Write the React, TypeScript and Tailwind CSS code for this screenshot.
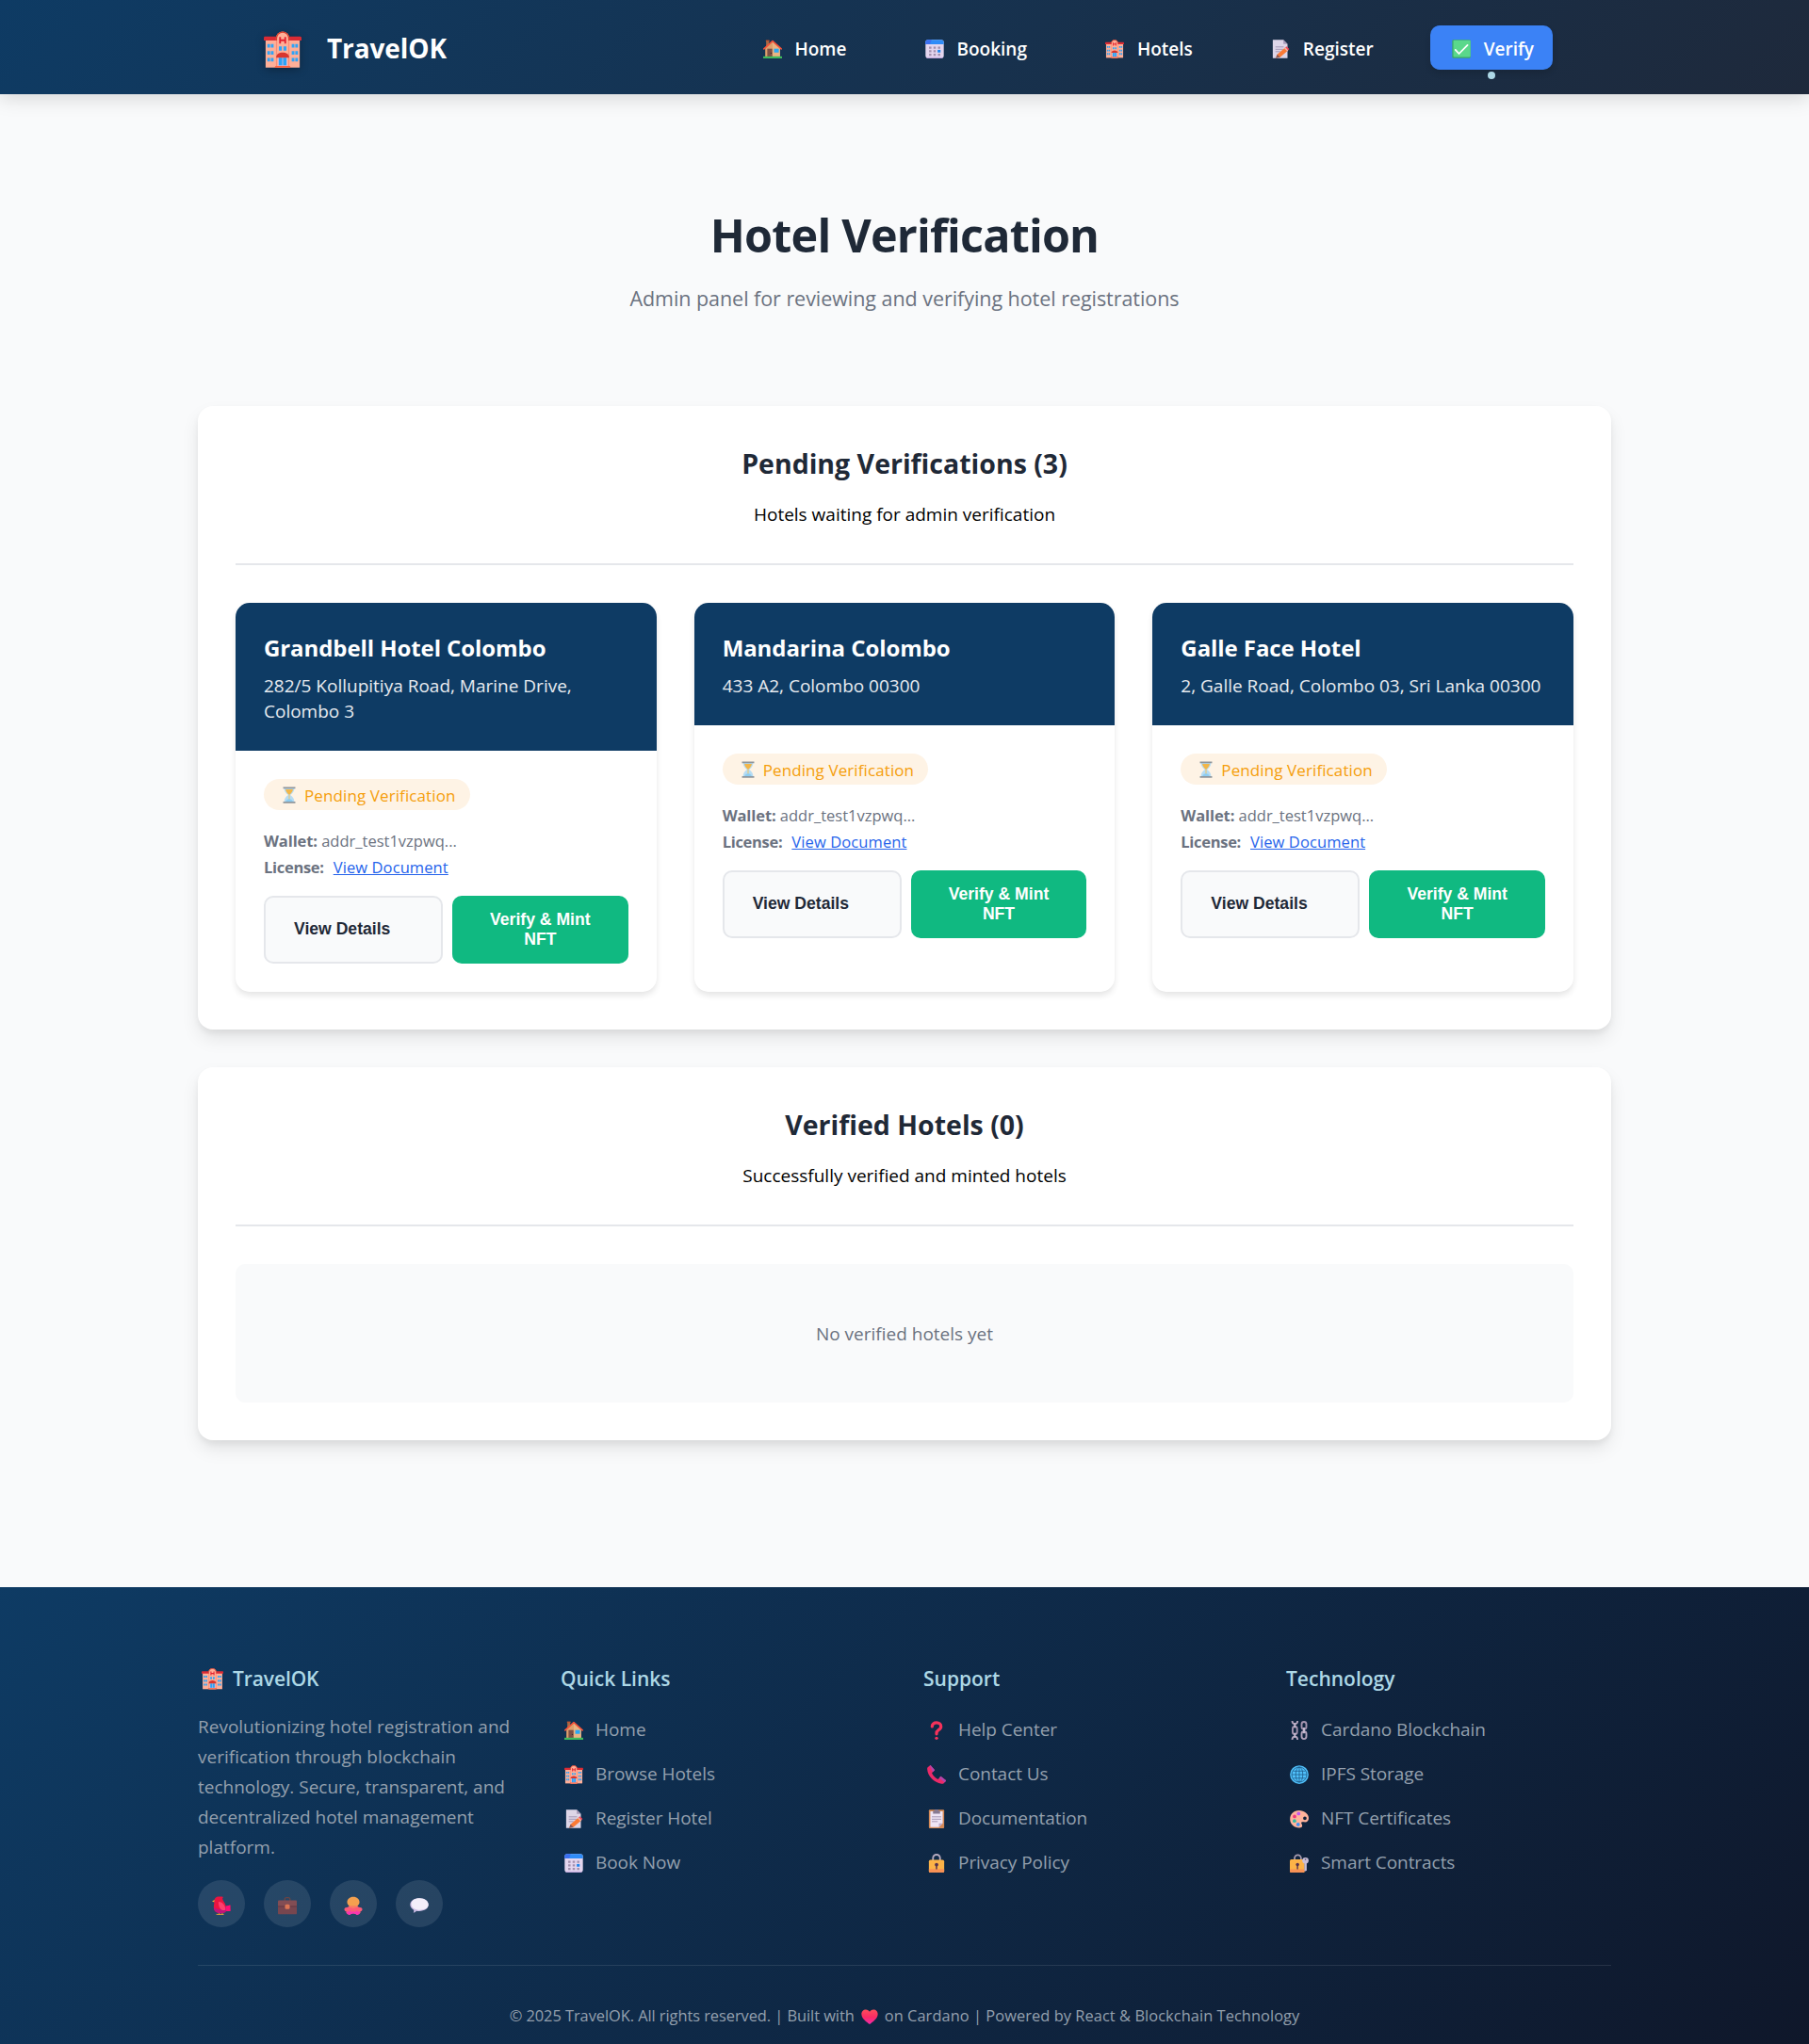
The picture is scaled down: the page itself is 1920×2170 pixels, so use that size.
import type { ComponentType, ReactNode } from "react";

type IconProps = { className?: string };
type IconType = ComponentType<IconProps>;

function Svg({ className = "", children }: { className?: string; children: ReactNode }) {
  return (
    <svg viewBox="0 0 32 32" fill="none" aria-hidden="true" className={`shrink-0 ${className}`}>
      {children}
    </svg>
  );
}

const HotelIcon: IconType = ({ className }) => (
  <Svg className={className}>
    <path d="M1.5 6h29v25h-29z" fill="#ffaf98" />
    <path d="M1 4.5h30c.6 0 1 .6 1 1.200v2.200H0V5.700c0-.700.4-1.200 1-1.200Z" fill="#d92b34" />
    <path d="M10.300 31V6a5.700 5.700 0 0 1 11.400 0v25z" fill="#f98d76" />
    <path d="M10.300 6a5.700 5.700 0 0 1 11.400 0v2h-1.500V6a4.200 4.200 0 0 0-8.400 0v2h-1.500z" fill="#d8412f" />
    <path d="M11.300 31V6.200a4.700 4.700 0 0 1 9.400 0V31z" fill="#ffaf98" />
    <path d="M13.800 5v5.500M18.200 5v5.500M13.800 7.800h4.400" stroke="#e3202f" strokeWidth="1.500" />
    <path d="M3 11h2.300v3H3zM6 11h2.300v3H6zM3 17h2.300v3H3zM6 17h2.300v3H6zM3 22.800h2.300v3H3zM6 22.800h2.300v3H6zM23.700 11H26v3h-2.300zM26.700 11H29v3h-2.300zM23.700 17H26v3h-2.300zM26.700 17H29v3h-2.300zM23.700 22.800H26v3h-2.300zM26.700 22.800H29v3h-2.300zM12.800 13h2.500v3.500h-2.500zM16.700 13h2.500v3.500h-2.500z" fill="#2fa4f7" />
    <path d="M12 22h8v8h-8z" fill="#c9b7d8" />
    <path d="M12.800 22.500h2.800V29h-2.800zM16.400 22.500h2.800V29h-2.800z" fill="#29a3f7" />
    <path d="M10.500 22.500c0-3 2.500-4.300 5.500-4.300s5.500 1.300 5.500 4.300z" fill="#d8362f" />
    <path d="M10 29.500h12L23 31H9z" fill="#ff5f3c" />
  </Svg>
);

const HouseIcon: IconType = ({ className }) => (
  <Svg className={className}>
    <path d="M5 1.500h5V14H5z" fill="#a56a45" />
    <path d="M4.500 1h6v2.200h-6z" fill="#c1512f" />
    <path d="M3.500 14.500 16 3l12.500 11.500V30h-25z" fill="#dfa06c" />
    <path d="M16 3l12.500 11.500V30H16z" fill="#eab583" />
    <path d="M1.300 15.800 16 2.500l14.700 13.300" stroke="#f4523a" strokeWidth="2.600" strokeLinecap="round" strokeLinejoin="round" />
    <path d="M7 15.500h8.500V30H7z" fill="#7d4f45" />
    <circle cx="13.500" cy="23" r="1" fill="#3a2a2a" />
    <path d="M18.500 15.500h8v6.500h-8z" fill="#2aa8f5" />
    <path d="M0 28.500h32V32H0z" fill="#3fba5d" />
  </Svg>
);

const CalendarIcon: IconType = ({ className }) => (
  <Svg className={className}>
    <rect x=".5" y=".5" width="31" height="31" rx="4.500" fill="#e4d6ef" />
    <path d="M.5 8V5A4.500 4.500 0 0 1 5 .5h22A4.500 4.500 0 0 1 31.500 5v3z" fill="#2f8cf8" />
    <path d="M.5 8V5A4.500 4.500 0 0 1 5 .5h6L8 8z" fill="#3b6ff0" />
    <path d="M6.500 12h4v3.500h-4zM14 12h4v3.500h-4zM21.500 12h4v3.500h-4zM6.500 18h4v3.500h-4zM14 18h4v3.500h-4zM6.500 24h4v3.500h-4zM14 24h4v3.500h-4zM21.500 24h4v3.500h-4z" fill="#a290ae" />
    <path d="M21 17.500h5V22h-5z" fill="#1f86ee" />
    <path d="M2.500 30.800h27" stroke="#c9a5e8" strokeWidth="1.200" />
  </Svg>
);

const MemoIcon: IconType = ({ className }) => (
  <Svg className={className}>
    <path d="M3 .5h18L28 7.500V31.500H3z" fill="#ded6e8" />
    <path d="M21 .5 28 7.500h-7z" fill="#a99cba" />
    <path d="M7.500 12.500h14M7.500 16.500h13M7.500 20.500h8" stroke="#9b8fae" strokeWidth="1.400" />
    <path d="m8.500 31 2-6L24 13.500l5 5L15.500 30z" fill="#fb7a35" />
    <path d="m24 13.500 2.200-2 4.700 4.600-1.900 2.400z" fill="#f2455c" />
    <path d="m10.500 25 5 5-7.500 1.500z" fill="#8d5a56" />
    <path d="m22.500 14.800 5 5 1.700-1.500-5-5z" fill="#f3b5a5" />
  </Svg>
);

const CheckIcon: IconType = ({ className }) => (
  <Svg className={className}>
    <rect x=".5" y=".5" width="31" height="31" rx="2" fill="#3aa866" />
    <rect x="2.500" y="1" width="29" height="28.500" rx="1.500" fill="#5ad88b" />
    <path d="m6 17.500 6 6.500L26.500 9.500" stroke="#fff" strokeWidth="2.800" strokeLinecap="round" strokeLinejoin="round" />
  </Svg>
);

const HourglassIcon: IconType = ({ className }) => (
  <Svg className={className}>
    <path d="M6.500 3h19c0 6-2.500 9-7.500 13 5 4 7.500 7 7.500 13h-19c0-6 2.500-9 7.500-13C9 12 6.500 9 6.500 3Z" fill="#b7dcf3" />
    <path d="M9 5.500h14c-.5 4.500-3.500 7.500-7 10.500-3.500-3-6.500-6-7-10.500Z" fill="#f2b648" />
    <path d="M16 16v11" stroke="#f2c25f" strokeWidth="1.600" />
    <path d="M9 29c1-4 4-5.500 7-5.500s6 1.500 7 5.500z" fill="#8ccdf2" />
    <path d="M4.500 1h23v2.800h-23zM4.500 28.600h23v2.800h-23z" fill="#8f969c" />
  </Svg>
);

const BirdIcon: IconType = ({ className }) => (
  <Svg className={className}>
    <path d="M12 28v3M17.500 28v3M8 31h6M14.500 31h5" stroke="#e9a13a" strokeWidth="1.500" strokeLinecap="round" />
    <path d="M4.500 6 0 9.300l4.800 1z" fill="#f7b531" />
    <path d="M4 7.500C4 3.500 7 .8 11 .8h6c2 0 2.400 1.700.8 2.600C18 8 22.500 10.500 23.500 17l7.500-2v10.500h-7c-2 2.500-4.500 3.500-9 3.500C8 29 3 25.500 3 19c0-4 1-7 1-11.500Z" fill="#ea1440" />
    <path d="M3 19c0 6.500 5 10 12 10 4.500 0 7-1 9-3.500h7V21l-11-3-8 5z" fill="#c0147c" />
    <path d="M11 9.500c6 0 12 5.500 12 14-7 2.500-12-3-12-14Z" fill="#ff3f6d" />
    <path d="m23.500 17 7.500-2v10.500h-6.500z" fill="#ff0f76" />
  </Svg>
);

const BriefcaseIcon: IconType = ({ className }) => (
  <Svg className={className}>
    <path d="M11.500 8V5.500c0-2 1.200-3 3-3h3c1.800 0 3 1 3 3V8" stroke="#6b4444" strokeWidth="2" />
    <rect x="0" y="7" width="32" height="12" rx="1.500" fill="#824d54" />
    <path d="M0 17.500h32V29c0 1-.6 1.800-1.700 1.800H1.700C.6 30.800 0 30 0 29z" fill="#77464f" />
    <path d="M0 16.800h32v1.300H0z" fill="#5b333e" />
    <rect x="12" y="14" width="8" height="8" rx="2.500" fill="#dc7654" />
  </Svg>
);

const OctopusIcon: IconType = ({ className }) => (
  <Svg className={className}>
    <path d="M10 14h12c.3 2.500 1.500 4.200 3.500 4.600 2.800.4 4.700.400 5.500 2.400.9 2.500-.6 4.600-3 5 .8 2-.6 4-2.500 4.300-1.600 1.700-4 1.700-5.300 0L16 29l-4.200 1.300c-1.300 1.700-3.700 1.700-5.300 0C4.600 30 3.200 28 4 26c-2.400-.4-3.900-2.500-3-5 .8-2 2.700-2 5.500-2.400 2-.4 3.200-2.100 3.500-4.600Z" fill="#fc5b78" />
    <path d="M5 26.500c2 .6 4-.5 5.500-2.500L13 27.500l3-2 3 2 2.500-3.500c1.500 2 3.500 3.100 5.500 2.500.9 2-.6 4.500-2.500 4.800-1.600 1-3.200.8-4.700-.8L16 29.500l-3.800 1c-1.500 1.600-3.100 1.800-4.700.8-1.900-.3-3.400-2.800-2.500-4.800Z" fill="#fb35b2" />
    <path d="M16 1c6.200 0 10.500 4 10.500 9 0 3.500-1.800 4.700-3.200 6.500C22 18.800 20 20 16 20s-6-1.200-7.300-3.500C7.300 14.700 5.500 13.500 5.500 10c0-5 4.300-9 10.500-9Z" fill="#f4a04f" />
    <path d="M8.700 16.500h14.600C22 18.800 20 20 16 20s-6-1.200-7.300-3.500Z" fill="#f77b64" />
  </Svg>
);

const SpeechIcon: IconType = ({ className }) => (
  <Svg className={className}>
    <path d="M16 3.500c9 0 15.500 4.500 15.500 11S25 25.500 16 25.500c-1.800 0-3.500-.2-5-.500C10 26.500 8 28 6 28c1-1.500 1-3 .5-4.500C3 21.500.5 18.500.5 14.500.5 8 7 3.500 16 3.500Z" fill="#cbbbe4" />
    <path d="M17 3.600c8.500.2 14.500 4.700 14.500 10.900S25.500 23.500 17 23.500 2.500 19.500 2.500 13.500 8 3.400 17 3.600Z" fill="#f3eefa" />
  </Svg>
);

const QuestionIcon: IconType = ({ className }) => (
  <Svg className={className}>
    <path d="M8.500 9.500C8.500 5.300 11.700 3 16 3s7.500 2.600 7.500 6.500c0 3.500-2.300 4.800-4.500 6.200-2 1.300-3 2.400-3 5.300v1" stroke="#f5325b" strokeWidth="5.200" strokeLinecap="round" />
    <circle cx="16" cy="29.300" r="2.700" fill="#f5325b" />
  </Svg>
);

const PhoneIcon: IconType = ({ className }) => (
  <Svg className={className}>
    <path d="M1 3.500 4.500.6c.6-.5 1.400-.4 1.900.2L13 8.500l-5 4.600c2.500 5 6 8.500 10.500 10.700l4.600-5 8.200 6.300c.7.600.8 1.500.2 2.100l-3.200 3.400c-1 1-2.300 1.200-4 1C12 30 .6 18.500.2 6.500c0-1.200.1-2.400.8-3Z" fill="#ec2a68" />
    <path d="M4.500.6c.6-.5 1.400-.4 1.900.2L13 8.500l-3.300 3zM23.100 18.800l8.200 6.300c.7.600.8 1.500.2 2.100L30 29l-9.500-7.500z" fill="#b145ae" />
  </Svg>
);

const ClipboardIcon: IconType = ({ className }) => (
  <Svg className={className}>
    <rect x="3" y=".5" width="26" height="31.500" rx="1.500" fill="#d58a57" />
    <path d="M5.500 3h21v20.500L20 30H5.500z" fill="#efe5f6" />
    <path d="M20 30v-6.500h6.500z" fill="#bbaaca" />
    <path d="M10 2.500h2.500a3.500 3.500 0 0 1 7 0H22v4.500H10z" fill="#887a92" />
    <path d="M8 12.500h16M8 16.500h16M8 20.500h10" stroke="#9c8dad" strokeWidth="1.400" />
  </Svg>
);

const LockIcon: IconType = ({ className }) => (
  <Svg className={className}>
    <path d="M10 12V7.500a6 6 0 0 1 12 0V12" stroke="#b6aabf" strokeWidth="3" />
    <rect x="3" y="10.500" width="26" height="21.500" rx="2.500" fill="#fdb347" />
    <path d="M3 26h26v3.500a2.500 2.500 0 0 1-2.500 2.500h-21A2.500 2.500 0 0 1 3 29.500z" fill="#f79155" />
    <circle cx="16" cy="18.500" r="3" fill="#55314f" />
    <path d="M14.800 19h2.400v7.500h-2.400z" fill="#55314f" />
  </Svg>
);

const LockKeyIcon: IconType = ({ className }) => (
  <Svg className={className}>
    <path d="M8 11.500V7.500a5.500 5.500 0 0 1 11 0v4" stroke="#a79bb0" strokeWidth="2.800" />
    <rect x="0" y="9.500" width="25" height="22.500" rx="2.500" fill="#fdb347" />
    <path d="M0 26.500h25v3a2.500 2.500 0 0 1-2.500 2.500h-20A2.500 2.500 0 0 1 0 29.500z" fill="#f79155" />
    <circle cx="13" cy="18.500" r="2.800" fill="#55314f" />
    <path d="M11.900 19h2.200v7.500h-2.200z" fill="#55314f" />
    <circle cx="26.500" cy="11.500" r="5.300" fill="#cabfd8" />
    <circle cx="26.500" cy="9.500" r="1.300" fill="#5a4a68" />
    <path d="M24.600 15.500h4V28l-2 2-2-2z" fill="#cabfd8" />
  </Svg>
);

const ChainsIcon: IconType = ({ className }) => (
  <Svg className={className}>
    <g strokeWidth="3">
      <path d="M4 0c0 3.500 2 5 4.500 5S13 3.500 13 0M4 32c0-4 2-5.500 4.500-5.500S13 28 13 32" stroke="#b3a4bd" />
      <rect x="4.700" y="9.500" width="7.600" height="13" rx="3.800" stroke="#a494af" />
      <path d="M8.500 4v7.500M8.500 20.500V28" stroke="#c9bcd2" />
      <rect x="20" y="1.500" width="8" height="12.500" rx="4" stroke="#a494af" />
      <rect x="20" y="18" width="8" height="12.500" rx="4" stroke="#b3a4bd" />
      <path d="M24 11v10" stroke="#c9bcd2" />
    </g>
  </Svg>
);

const GlobeIcon: IconType = ({ className }) => (
  <Svg className={className}>
    <circle cx="16" cy="16" r="15.800" fill="#4fc0fa" />
    <g stroke="#174f7c" strokeWidth="1.100">
      <circle cx="16" cy="16" r="12.800" />
      <ellipse cx="16" cy="16" rx="6" ry="12.800" />
      <path d="M16 3.200v25.600M3.200 16h25.600M5.500 10h21M5.500 22h21" />
    </g>
  </Svg>
);

const PaletteIcon: IconType = ({ className }) => (
  <Svg className={className}>
    <path
      fillRule="evenodd"
      d="M15.500 1.500C24.500 1.500 32 7.500 32 14.500c0 4.500-2.500 7.200-6 7.200-2.500 0-5-1-6.300.3-1.300 1.500 1.300 3 1.300 5.500s-2 3.500-5 3.500C7 31 .3 24.500.3 16.200.3 8 6.500 1.500 15.500 1.500Zm10 10.300a3 3 0 1 0 0 6 3 3 0 0 0 0-6Z"
      fill="#ffb39b"
    />
    <circle cx="14.800" cy="7" r="3" fill="#c255f2" />
    <circle cx="8" cy="11.800" r="3" fill="#f0387f" />
    <circle cx="7.800" cy="19.500" r="3" fill="#35b9a2" />
    <circle cx="14" cy="25.500" r="3" fill="#3c8ff5" />
  </Svg>
);

const HeartIcon: IconType = ({ className }) => (
  <svg viewBox="0 0 36 32" fill="none" aria-hidden="true" className={`shrink-0 ${className ?? ""}`}>
    <defs>
      <linearGradient id="heart" x1="18" y1="0" x2="18" y2="32" gradientUnits="userSpaceOnUse">
        <stop stopColor="#fd5059" />
        <stop offset=".55" stopColor="#f92a65" />
        <stop offset="1" stopColor="#f02bb0" />
      </linearGradient>
    </defs>
    <path d="M10 .8c3.800 0 6.500 2 8 4.700C19.500 2.800 22.200.8 26 .8c5.500 0 9.300 4.200 9.300 9.600C35.300 20 24 27.500 18 32 12 27.500.7 20 .7 10.400.7 5 4.500.8 10 .8Z" fill="url(#heart)" />
  </svg>
);

type LinkItem = { label: string; icon: IconType; active?: boolean };

const navLinks: LinkItem[] = [
  { label: "Home", icon: HouseIcon },
  { label: "Booking", icon: CalendarIcon },
  { label: "Hotels", icon: HotelIcon },
  { label: "Register", icon: MemoIcon },
  { label: "Verify", icon: CheckIcon, active: true },
];

const hotels = [
  { name: "Grandbell Hotel Colombo", address: "282/5 Kollupitiya Road, Marine Drive, Colombo 3" },
  { name: "Mandarina Colombo", address: "433 A2, Colombo 00300" },
  { name: "Galle Face Hotel", address: "2, Galle Road, Colombo 03, Sri Lanka 00300" },
];

const footerColumns: { title: string; links: LinkItem[] }[] = [
  {
    title: "Quick Links",
    links: [
      { label: "Home", icon: HouseIcon },
      { label: "Browse Hotels", icon: HotelIcon },
      { label: "Register Hotel", icon: MemoIcon },
      { label: "Book Now", icon: CalendarIcon },
    ],
  },
  {
    title: "Support",
    links: [
      { label: "Help Center", icon: QuestionIcon },
      { label: "Contact Us", icon: PhoneIcon },
      { label: "Documentation", icon: ClipboardIcon },
      { label: "Privacy Policy", icon: LockIcon },
    ],
  },
  {
    title: "Technology",
    links: [
      { label: "Cardano Blockchain", icon: ChainsIcon },
      { label: "IPFS Storage", icon: GlobeIcon },
      { label: "NFT Certificates", icon: PaletteIcon },
      { label: "Smart Contracts", icon: LockKeyIcon },
    ],
  },
];

const socials: IconType[] = [BirdIcon, BriefcaseIcon, OctopusIcon, SpeechIcon];

function Header() {
  return (
    <header className="relative z-10 h-[100px] bg-[linear-gradient(135deg,#0e3b64_0%,#1e293b_100%)] shadow-[0_4px_20px_rgba(0,0,0,0.15)]">
      <div className="mx-auto flex h-full w-[1500px] items-center justify-between pr-[62px] pl-[70px]">
        <a href="#" className="flex items-center gap-[27px] text-white">
          <HotelIcon className="mt-[6px] size-10 drop-shadow-[0_2px_4px_rgba(0,0,0,0.3)]" />
          <span className="pt-[2px] text-[28px] leading-10 font-bold tracking-[-0.1px]">TravelOK</span>
        </a>
        <nav className="mt-px flex items-center gap-10">
          {navLinks.map(({ label, icon: Icon, active }) => (
            <a
              key={label}
              href="#"
              className={`relative flex h-[47px] items-center gap-[10px] rounded-[10px] px-5 text-[19px] font-semibold text-white ${
                active ? "bg-[#3b82f6] shadow-[0_4px_6px_rgba(0,0,0,0.12)]" : ""
              }`}
            >
              <span className="flex w-[27px] justify-center pt-[3px]">
                <Icon className="size-5" />
              </span>
              <span className="pt-[2px] leading-7">{label}</span>
              {active && (
                <span className="absolute -bottom-[10px] left-1/2 size-2 -translate-x-1/2 rounded-full bg-[#add8e6]" />
              )}
            </a>
          ))}
        </nav>
      </div>
    </header>
  );
}

function Section({ title, subtitle, children }: { title: string; subtitle: string; children: ReactNode }) {
  return (
    <section className="rounded-[16px] bg-white p-10 shadow-[0_10px_20px_-2px_rgba(0,0,0,0.1),0_4px_6px_rgba(0,0,0,0.05)]">
      <div className="mb-10 border-b-2 border-[#e5e7eb] pt-px pb-[38px] text-center">
        <h2 className="text-[28.5px] leading-10 font-bold text-[#1f2937]">{title}</h2>
        <p className="mt-5 text-[19px] leading-7 text-black">{subtitle}</p>
      </div>
      {children}
    </section>
  );
}

function HotelCard({ name, address }: { name: string; address: string }) {
  return (
    <article className="flex h-[413px] flex-col overflow-hidden rounded-[15px] bg-white shadow-[0_4px_6px_rgba(0,0,0,0.1)]">
      <div className="bg-[#0e3b64] px-[30px] pt-[31px] pb-[28px]">
        <h3 className="text-[24px] leading-[34px] font-bold tracking-[-0.08px] text-white">{name}</h3>
        <p className="mt-[10px] text-[19px] leading-[27px] text-white/90">{address}</p>
      </div>
      <div className="p-[30px]">
        <div className="inline-flex h-[33px] items-center gap-[5px] rounded-full bg-[#fef3e5] pr-[15px] pl-4 align-top text-[17px] font-medium tracking-[0.1px] text-[#f59e0b]">
          <span className="flex w-[22px] justify-center">
            <HourglassIcon className="size-[18px]" />
          </span>
          <span className="pt-[2px]">Pending Verification</span>
        </div>
        <div className="mt-[19px] text-[16.5px] leading-7 text-[#6b7280]">
          <p>
            <strong className="font-bold tracking-[-0.1px]">Wallet:</strong> addr_test1vzpwq...
          </p>
          <p>
            <strong className="font-bold tracking-[-0.3px]">License:</strong>
            <a href="#" className="ml-[10px] tracking-[0.1px] text-[#2563eb] underline">
              View Document
            </a>
          </p>
        </div>
        <div className="mt-4 flex h-[72px] gap-[10px] font-['Liberation_Sans',sans-serif] text-[17.6px] leading-[21px] font-bold">
          <button className="w-[190px] rounded-[10px] border-2 border-[#e5e7eb] bg-[#f9fafb] pb-[2px] pl-[30px] text-left text-[#1f2937]">
            View Details
          </button>
          <button className="flex-1 rounded-[10px] bg-[#10b981] px-7 text-center text-white">Verify &amp; Mint NFT</button>
        </div>
      </div>
    </article>
  );
}

function Footer() {
  return (
    <footer className="mt-[156px] h-[485px] bg-[linear-gradient(135deg,#0e3b64_0%,#0f172a_100%)] text-[#94a0ae]">
      <div className="mx-auto w-[1500px] pt-[81px]">
        <div className="grid grid-cols-4 gap-10">
          <div>
            <h3 className="flex items-center text-[21px] leading-[33px] font-semibold tracking-[-0.1px] text-[#add8e6]">
              <HotelIcon className="mr-[10px] ml-1 size-[23px]" />
              TravelOK
            </h3>
            <p className="mt-[18px] text-[19px] leading-8">
              Revolutionizing hotel registration and verification through blockchain technology. Secure, transparent, and
              decentralized hotel management platform.
            </p>
            <div className="mt-[19px] flex gap-5">
              {socials.map((Icon, i) => (
                <a key={i} href="#" className="flex size-[50px] items-center justify-center rounded-full bg-white/10 pt-[3px]">
                  <Icon className="size-5" />
                </a>
              ))}
            </div>
          </div>
          {footerColumns.map(({ title, links }) => (
            <div key={title}>
              <h3 className="text-[21px] leading-[33px] font-semibold text-[#add8e6]">{title}</h3>
              <ul className="mt-6 flex flex-col gap-5">
                {links.map(({ label, icon: Icon }) => (
                  <li
                    key={label}
                    className="flex h-[27px] items-center gap-[9px] text-[19px] leading-[27px] tracking-[-0.05px]"
                  >
                    <span className="flex w-7 justify-center">
                      <Icon className="size-5" />
                    </span>
                    {label}
                  </li>
                ))}
              </ul>
            </div>
          ))}
        </div>
        <div className="mt-10 flex items-center justify-center border-t border-white/10 pt-[39px] text-[16.4px] leading-7">
          <span className="tracking-[-0.05px]">© 2025 TravelOK. All rights reserved. | Built with</span>
          <HeartIcon className="mx-[7px] mt-[2px] h-4 w-[18px]" />
          <span className="tracking-[0.06px]">on Cardano | Powered by React &amp; Blockchain Technology</span>
        </div>
      </div>
    </footer>
  );
}

export default function App() {
  return (
    <div className="h-[2170px] w-[1920px] overflow-hidden bg-[#f9fafb] font-['Open_Sans','Noto_Sans',sans-serif]">
      <Header />
      <main className="mx-auto w-[1500px] pt-[119px]">
        <div className="text-center">
          <h1 className="text-[48.5px] leading-[60px] font-bold tracking-[-0.8px] text-[#1f2937]">Hotel Verification</h1>
          <p className="mt-[23px] text-[21.5px] leading-[30px] tracking-[-0.05px] text-[#6b7280]">
            Admin panel for reviewing and verifying hotel registrations
          </p>
        </div>
        <div className="mt-[99px] flex flex-col gap-10">
          <Section title="Pending Verifications (3)" subtitle="Hotels waiting for admin verification">
            <div className="grid grid-cols-3 gap-10">
              {hotels.map((hotel) => (
                <HotelCard key={hotel.name} {...hotel} />
              ))}
            </div>
          </Section>
          <Section title="Verified Hotels (0)" subtitle="Successfully verified and minted hotels">
            <div className="rounded-[10px] bg-[#f9fafb] pt-[61px] pb-[59px] text-center text-[19px] leading-[27px] text-[#6b7280]">
              No verified hotels yet
            </div>
          </Section>
        </div>
      </main>
      <Footer />
    </div>
  );
}
